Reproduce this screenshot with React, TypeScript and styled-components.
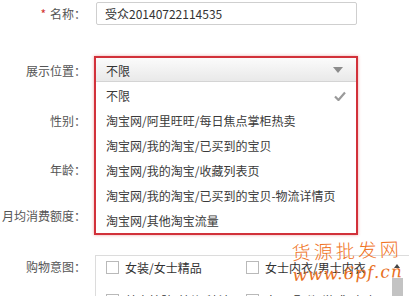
import React from "react";
import styled, { createGlobalStyle } from "styled-components";

const GlobalStyle = createGlobalStyle`
    html, body {
        margin: 0;
        padding: 0;
        background: #fff;
        overflow: hidden;
    }
    body {
        font-family: "Noto Sans CJK SC", "Noto Sans", sans-serif;
        font-size: 12px;
        color: #333;
    }
`;

const Form = styled.div`
    position: relative;
    width: 409px;
    height: 296px;
    padding-top: 2px;
    box-sizing: border-box;
    overflow: hidden;
`;

const Row = styled.div<{ $top: number; $height: number; $alignTop?: boolean }>`
    display: grid;
    grid-template-columns: 86px 1fr;
    column-gap: 8px;
    align-items: ${(p) => (p.$alignTop ? "start" : "center")};
    margin-top: ${(p) => p.$top}px;
    min-height: ${(p) => p.$height}px;
`;

const Label = styled.div<{ $padTop?: number }>`
    text-align: right;
    white-space: nowrap;
    color: #555;
    line-height: 16px;
    padding-top: ${(p) => p.$padTop || 0}px;
`;

const Required = styled.span`
    color: #d23232;
    margin-right: 4px;
`;

const TextInput = styled.div`
    margin-left: 2px;
    width: 261px;
    height: 23px;
    box-sizing: border-box;
    border: 1px solid #cfcfcf;
    border-radius: 2px;
    padding-left: 8px;
    display: flex;
    align-items: center;
    color: #333;
`;

const SelectAnchor = styled.div`
    position: relative;
    height: 30px;
`;

const SelectPanel = styled.div`
    position: absolute;
    top: 0;
    left: 0;
    width: 264px;
    box-sizing: border-box;
    border: 2px solid #d2313a;
    box-shadow: 0 0 3px rgba(220, 60, 60, 0.45);
    background: #fff;
    z-index: 2;
`;

const SelectHead = styled.div`
    height: 24px;
    box-sizing: border-box;
    border-bottom: 1px solid #d4d4d4;
    background: linear-gradient(#fbfbfb, #e9e9e9);
    display: flex;
    align-items: center;
    justify-content: space-between;
    padding: 1px 13px 0 10px;
`;

const Caret = styled.span`
    width: 0;
    height: 0;
    border-left: 5px solid transparent;
    border-right: 5px solid transparent;
    border-top: 6px solid #8c8c8c;
`;

const OptionList = styled.ul`
    list-style: none;
    margin: 0;
    padding: 1px 0 0;
`;

const Option = styled.li`
    height: 25px;
    display: flex;
    align-items: center;
    justify-content: space-between;
    padding: 0 10px;
    color: #3a3a3a;
`;

const Check = styled.svg`
    width: 12px;
    height: 10px;
`;

const BoxWrap = styled.div`
    margin-left: 1px;
    margin-right: -2px;
    height: 60px;
    border: 1px solid #dcdcdc;
    border-right: none;
    display: flex;
`;

const CheckGrid = styled.div`
    flex: 1;
    display: grid;
    grid-template-columns: 140px 1fr;
    row-gap: 18px;
    padding: 4px 0 0 10px;
    align-content: start;
`;

const CheckItem = styled.label`
    display: flex;
    align-items: center;
    gap: 6px;
    height: 15px;
    white-space: nowrap;
    color: #333;
`;

const Box = styled.span`
    width: 13px;
    height: 13px;
    box-sizing: border-box;
    border: 1px solid #b9b9b9;
    background: #fff;
`;

const ScrollBar = styled.div`
    width: 14px;
    margin-right: 7px;
    display: flex;
    flex-direction: column;
    align-items: center;
    padding-top: 8px;
`;

const ArrowUp = styled.span`
    width: 0;
    height: 0;
    border-left: 3px solid transparent;
    border-right: 3px solid transparent;
    border-bottom: 4px solid #444;
`;

const Thumb = styled.div`
    margin-top: 10px;
    width: 11px;
    flex: 1;
    background: #c3c3c3;
`;

const Watermark = styled.div`
    position: absolute;
    left: 292px;
    top: 238px;
    z-index: 3;
    color: #f0741f;
    pointer-events: none;
    transform: rotate(-2deg);
`;

const WaterTitle = styled.div`
    font-size: 19px;
    letter-spacing: 3px;
    line-height: 24px;
    font-weight: 300;
`;

const WaterUrl = styled.div`
    font-family: "DejaVu Serif", serif;
    font-style: italic;
    font-size: 17px;
    line-height: 22px;
    letter-spacing: 1px;
    color: #e8701e;
`;

const options = [
    "不限",
    "淘宝网/阿里旺旺/每日焦点掌柜热卖",
    "淘宝网/我的淘宝/已买到的宝贝",
    "淘宝网/我的淘宝/收藏列表页",
    "淘宝网/我的淘宝/已买到的宝贝-物流详情页",
    "淘宝网/其他淘宝流量",
];

const intents = ["女装/女士精品", "女士内衣/男士内衣", "美容护肤/美体/精油", "电玩/配件/游戏/攻略"];

export default function App() {
    return (
        <>
            <GlobalStyle />
            <Form>
                <Row $top={0} $height={23}>
                    <Label>
                        <Required>*</Required>名称：
                    </Label>
                    <TextInput>受众20140722114535</TextInput>
                </Row>

                <Row $top={31} $height={30}>
                    <Label>展示位置：</Label>
                    <SelectAnchor>
                        <SelectPanel>
                            <SelectHead>
                                不限
                                <Caret />
                            </SelectHead>
                            <OptionList>
                                {options.map((o, i) => (
                                    <Option key={i}>
                                        {o}
                                        {i === 0 && (
                                            <Check viewBox="0 0 12 10">
                                                <path d="M1 5.5 L4.5 9 L11 1.5" fill="none" stroke="#9a9a9a" strokeWidth="2.2" />
                                            </Check>
                                        )}
                                    </Option>
                                ))}
                            </OptionList>
                        </SelectPanel>
                    </SelectAnchor>
                </Row>

                <Row $top={20} $height={30}>
                    <Label>性别：</Label>
                    <div />
                </Row>

                <Row $top={19} $height={30}>
                    <Label>年龄：</Label>
                    <div />
                </Row>

                <Row $top={16} $height={30}>
                    <Label>月均消费额度：</Label>
                    <div />
                </Row>

                <Row $top={24} $height={60} $alignTop>
                    <Label $padTop={4}>购物意图：</Label>
                    <BoxWrap>
                        <CheckGrid>
                            {intents.map((t) => (
                                <CheckItem key={t}>
                                    <Box />
                                    {t}
                                </CheckItem>
                            ))}
                        </CheckGrid>
                        <ScrollBar>
                            <ArrowUp />
                            <Thumb />
                        </ScrollBar>
                    </BoxWrap>
                </Row>

                <Watermark>
                    <WaterTitle>货源批发网</WaterTitle>
                    <WaterUrl>www.6pf.cn</WaterUrl>
                </Watermark>
            </Form>
        </>
    );
}
